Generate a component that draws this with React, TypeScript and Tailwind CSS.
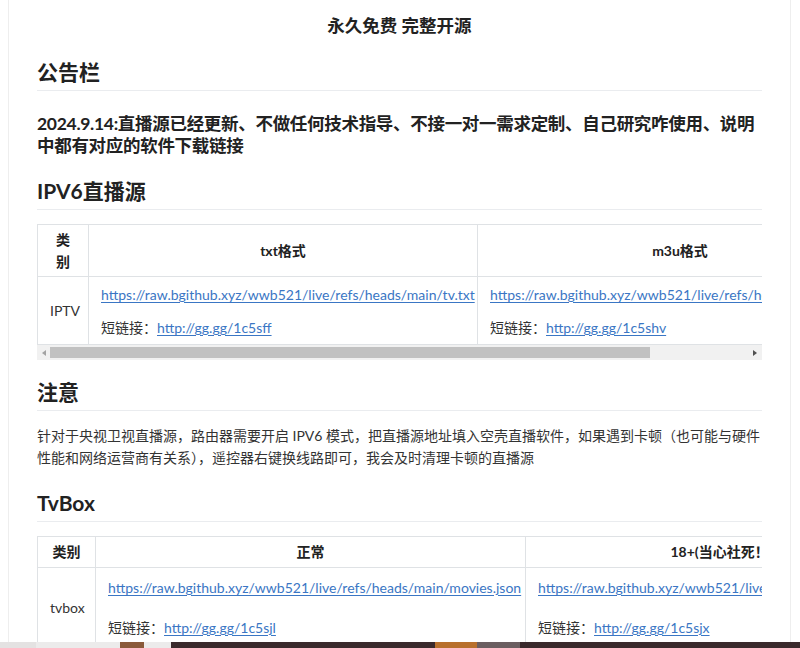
import React from "react";

const font = "[font-family:'Lato','Noto_Sans_CJK_SC',sans-serif]";

function H2({ children, top = "mt-[21px]" }: { children: React.ReactNode; top?: string }) {
  return (
    <h2 className={`${top} mb-[14px] border-b border-[#eaecef] pb-[5px] text-[21px] font-bold leading-[26px] text-[#222]`}>
      {children}
    </h2>
  );
}

function Link({ href }: { href: string }) {
  return (
    <a href={href} className="text-[#3a76c4] underline underline-offset-2 decoration-[#3a76c4]">
      {href}
    </a>
  );
}

// fake horizontal scrollbar, the page's native one is not painted in the headless shot
function ScrollBar() {
  return (
    <div className="flex h-[15px] items-center bg-[#f1f1f1]">
      <div className="flex w-[13px] justify-center">
        <div className="h-0 w-0 border-y-[3px] border-r-[4px] border-y-transparent border-r-[#a3a3a3]" />
      </div>
      <div className="h-[11px] w-[600px] bg-[#c1c1c1]" />
      <div className="flex-1" />
      <div className="flex w-[15px] justify-center">
        <div className="h-0 w-0 border-y-[3px] border-l-[4px] border-y-transparent border-l-[#505050]" />
      </div>
    </div>
  );
}

const base = "https://raw.bgithub.xyz/wwb521/live/refs/heads/main/";

export default function App() {
  return (
    <div className={`min-h-screen bg-white text-[14px] text-[#333] ${font}`}>
      <div className="ml-2 min-h-screen w-[783px] border-x border-[#eee] px-7 pt-[14px]">
        <h1 className="text-center text-[17.5px] font-bold leading-[24px] text-[#222]">
          永久免费 完整开源
        </h1>

        <H2>公告栏</H2>
        <h3 className="mt-[22px] text-[17.5px] font-bold leading-[22px] tracking-[-0.3px] text-[#222]">
          2024.9.14:直播源已经更新、不做任何技术指导、不接一对一需求定制、自己研究咋使用、说明中都有对应的软件下载链接
        </h3>

        <H2>IPV6直播源</H2>
        <div className="overflow-hidden">
          <table className="w-[845px] table-fixed border-collapse leading-[22px]">
            <colgroup>
              <col className="w-[51px]" />
              <col className="w-[389px]" />
              <col className="w-[405px]" />
            </colgroup>
            <thead>
              <tr>
                <th className="border border-[#dfe2e5] px-3 pt-1 pb-[3px] font-bold text-[#222]">类别</th>
                <th className="border border-[#dfe2e5] px-3 pt-1 pb-[3px] font-bold text-[#222]">txt格式</th>
                <th className="border border-[#dfe2e5] px-3 pt-1 pb-[3px] font-bold text-[#222]">m3u格式</th>
              </tr>
            </thead>
            <tbody>
              <tr>
                <td className="border border-[#dfe2e5] px-3 py-1 text-center">IPTV</td>
                <td className="whitespace-nowrap border border-[#dfe2e5] px-3 pt-[3px] pb-[5px]">
                  <div className="mt-1"><Link href={base + "tv.txt"} /></div>
                  <div className="mt-[11px]">短链接：<Link href="http://gg.gg/1c5sff" /></div>
                </td>
                <td className="whitespace-nowrap border border-[#dfe2e5] px-3 pt-[3px] pb-[5px]">
                  <div className="mt-1"><Link href={base + "tv.m3u"} /></div>
                  <div className="mt-[11px]">短链接：<Link href="http://gg.gg/1c5shv" /></div>
                </td>
              </tr>
            </tbody>
          </table>
        </div>
        <ScrollBar />

        <H2 top="mt-[19px]">注意</H2>
        <p className="mb-[14px] leading-[22px]">
          针对于央视卫视直播源，路由器需要开启 IPV6 模式，把直播源地址填入空壳直播软件，如果遇到卡顿（也可能与硬件性能和网络运营商有关系），遥控器右键换线路即可，我会及时清理卡顿的直播源
        </p>

        <H2>TvBox</H2>
        <div className="overflow-hidden">
          <table className="w-[880px] table-fixed border-collapse leading-[22px]">
            <colgroup>
              <col className="w-[58px]" />
              <col className="w-[430px]" />
              <col className="w-[392px]" />
            </colgroup>
            <thead>
              <tr>
                <th className="border border-[#dfe2e5] px-3 py-[4px] font-bold text-[#222]">类别</th>
                <th className="border border-[#dfe2e5] px-3 py-[4px] font-bold text-[#222]">正常</th>
                <th className="whitespace-nowrap border border-[#dfe2e5] px-3 py-[4px] font-bold text-[#222]">18+(当心社死！)</th>
              </tr>
            </thead>
            <tbody>
              <tr>
                <td className="border border-[#dfe2e5] px-3 text-center">tvbox</td>
                <td className="whitespace-nowrap border border-[#dfe2e5] px-3 pt-[9px] pb-2">
                  <div><Link href={base + "movies.json"} /></div>
                  <div className="mt-[18px]">短链接：<Link href="http://gg.gg/1c5sjl" /></div>
                </td>
                <td className="whitespace-nowrap border border-[#dfe2e5] px-3 pt-[9px] pb-2">
                  <div><Link href={base + "adult.json"} /></div>
                  <div className="mt-[18px]">短链接：<Link href="http://gg.gg/1c5sjx" /></div>
                </td>
              </tr>
            </tbody>
          </table>
        </div>
        <ScrollBar />
        <div className="h-10" />
      </div>

      <div className="fixed bottom-0 left-0 flex h-[6px] w-full">
        <div className="w-[36px] bg-[#e4e2e2]" />
        <div className="w-[84px] bg-[#ecebeb]" />
        <div className="w-[24px] bg-[#8a5a3a]" />
        <div className="w-[27px] bg-[#ecebeb]" />
        <div className="w-[264px] bg-[#3a2a2c]" />
        <div className="w-[42px] bg-[#b8702c]" />
        <div className="w-[43px] bg-[#6a5e60]" />
        <div className="flex-1 bg-[#3a2a2c]" />
      </div>
    </div>
  );
}
